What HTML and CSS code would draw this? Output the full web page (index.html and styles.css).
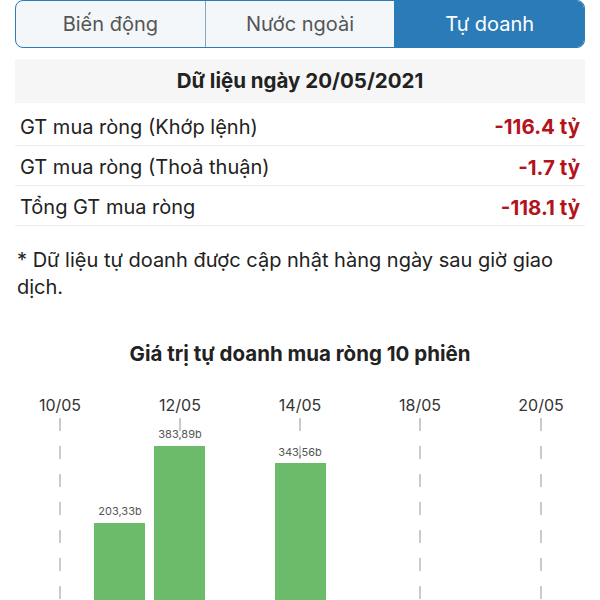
FILE: index.html
```html
<!DOCTYPE html>
<html lang="vi">
<head>
  <meta charset="UTF-8">
  <title>Tự doanh</title>
  <link rel="stylesheet" href="styles.css">
</head>
<body>
  <!-- Thanh chọn tab -->
  <div class="segments">
    <div class="segment">Biến động</div>
    <div class="segment">Nước ngoài</div>
    <div class="segment active">Tự doanh</div>
  </div>

  <!-- Bảng dữ liệu -->
  <div class="data-table">
    <div class="data-head">Dữ liệu ngày 20/05/2021</div>
    <div class="data-row first">
      <span>GT mua ròng (Khớp lệnh)</span>
      <span class="neg">-116.4 tỷ</span>
    </div>
    <div class="data-row">
      <span>GT mua ròng (Thoả thuận)</span>
      <span class="neg">-1.7 tỷ</span>
    </div>
    <div class="data-row">
      <span>Tổng GT mua ròng</span>
      <span class="neg">-118.1 tỷ</span>
    </div>
  </div>

  <p class="note">* Dữ liệu tự doanh được cập nhật hàng ngày sau giờ giao dịch.</p>

  <!-- Biểu đồ -->
  <h2 class="chart-title">Giá trị tự doanh mua ròng 10 phiên</h2>
  <svg class="chart" width="600" height="220" viewBox="0 0 600 220">
    <g class="grid">
      <line x1="60" y1="37" x2="60" y2="220"></line>
      <line x1="180" y1="37" x2="180" y2="220"></line>
      <line x1="300" y1="37" x2="300" y2="220"></line>
      <line x1="420" y1="37" x2="420" y2="220"></line>
      <line x1="541" y1="37" x2="541" y2="220"></line>
    </g>
    <g class="axis">
      <text x="60" y="30">10/05</text>
      <text x="180" y="30">12/05</text>
      <text x="300" y="30">14/05</text>
      <text x="420" y="30">18/05</text>
      <text x="541" y="30">20/05</text>
    </g>
    <g class="bars">
      <rect x="94" y="142" width="51" height="80"></rect>
      <rect x="154" y="65" width="51" height="160"></rect>
      <rect x="275" y="82" width="51" height="140"></rect>
    </g>
    <g class="values">
      <text x="120" y="134">203,33b</text>
      <text x="180" y="57">383,89b</text>
      <text x="300" y="75">343,56b</text>
    </g>
  </svg>
</body>
</html>
```

FILE: styles.css
```css
body {
  margin: 0;
  padding: 0 15px;
  font-family: Inter, "Noto Sans", sans-serif;
  color: #222;
  background: #fff;
  overflow: hidden;
}
/* Thanh chọn tab */
.segments {
  display: flex;
  height: 48px;
  box-sizing: border-box;
  border: 1px solid #2c7bb9;
  border-radius: 8px;
  overflow: hidden;
  background: #f4f7fa;
}
.segment {
  flex: 1;
  display: flex;
  align-items: center;
  justify-content: center;
  font-size: 20px;
  color: #555;
  border-left: 1px solid #7fa8c9;
}
.segment:first-child {
  border-left: none;
}
.segment.active {
  background: #2c7bb9;
  color: #fff;
  border-left-color: #2c7bb9;
}
/* Bảng dữ liệu */
.data-table {
  margin-top: 11px;
}
.data-head {
  height: 44px;
  line-height: 44px;
  background: #f6f6f6;
  text-align: center;
  font-weight: 700;
  font-size: 20.5px;
}
.data-row {
  display: flex;
  justify-content: space-between;
  align-items: center;
  box-sizing: border-box;
  height: 40px;
  padding: 3px 5px 0;
  font-size: 20px;
  border-bottom: 1px solid #ececec;
}
.data-row.first {
  height: 43px;
  padding-top: 5px;
}
.neg {
  color: #b3141b;
  font-weight: 700;
  font-size: 20.5px;
}
.note {
  margin: 21px 0 0;
  padding-left: 2px;
  font-size: 20px;
  line-height: 27px;
  color: #222;
}
.chart-title {
  margin: 40px 0 0;
  font-size: 20.5px;
  line-height: 26px;
  text-align: center;
  font-weight: 700;
}
/* Biểu đồ */
.chart {
  display: block;
  margin: 14px 0 0 -15px;
}
.grid line {
  stroke: #a8a8a8;
  stroke-width: 1.2;
  stroke-dasharray: 13 15;
}
.axis text {
  font-size: 16px;
  fill: #333;
  text-anchor: middle;
}
.bars rect {
  fill: #6cbb6a;
}
.values text {
  font-size: 11px;
  fill: #555;
  text-anchor: middle;
}
```
